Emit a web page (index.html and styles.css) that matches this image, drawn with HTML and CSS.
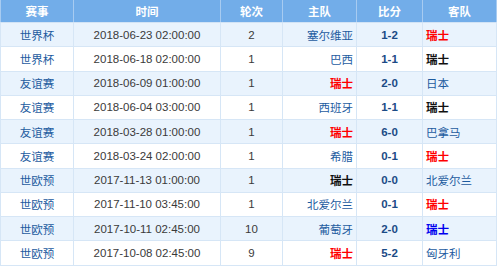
FILE: index.html
```html
<!DOCTYPE html>
<html>
<head>
<meta charset="utf-8">
<link rel="stylesheet" href="styles.css">
</head>
<body>
<table class="matches">
  <colgroup>
    <col class="c-league"><col class="c-time"><col class="c-round"><col class="c-home"><col class="c-score"><col class="c-away">
  </colgroup>
  <thead>
    <tr><th>赛事</th><th>时间</th><th>轮次</th><th>主队</th><th>比分</th><th>客队</th></tr>
  </thead>
  <tbody>
    <tr><td class="league">世界杯</td><td class="time">2018-06-23 02:00:00</td><td class="round">2</td><td class="home">塞尔维亚</td><td class="score">1-2</td><td class="away win">瑞士</td></tr>
    <tr><td class="league">世界杯</td><td class="time">2018-06-18 02:00:00</td><td class="round">1</td><td class="home">巴西</td><td class="score">1-1</td><td class="away draw">瑞士</td></tr>
    <tr><td class="league">友谊赛</td><td class="time">2018-06-09 01:00:00</td><td class="round">1</td><td class="home win">瑞士</td><td class="score">2-0</td><td class="away">日本</td></tr>
    <tr><td class="league">友谊赛</td><td class="time">2018-06-04 03:00:00</td><td class="round">1</td><td class="home">西班牙</td><td class="score">1-1</td><td class="away draw">瑞士</td></tr>
    <tr><td class="league">友谊赛</td><td class="time">2018-03-28 01:00:00</td><td class="round">1</td><td class="home win">瑞士</td><td class="score">6-0</td><td class="away">巴拿马</td></tr>
    <tr><td class="league">友谊赛</td><td class="time">2018-03-24 02:00:00</td><td class="round">1</td><td class="home">希腊</td><td class="score">0-1</td><td class="away win">瑞士</td></tr>
    <tr><td class="league">世欧预</td><td class="time">2017-11-13 01:00:00</td><td class="round">1</td><td class="home draw">瑞士</td><td class="score">0-0</td><td class="away">北爱尔兰</td></tr>
    <tr><td class="league">世欧预</td><td class="time">2017-11-10 03:45:00</td><td class="round">1</td><td class="home">北爱尔兰</td><td class="score">0-1</td><td class="away win">瑞士</td></tr>
    <tr><td class="league">世欧预</td><td class="time">2017-10-11 02:45:00</td><td class="round">10</td><td class="home">葡萄牙</td><td class="score">2-0</td><td class="away lose">瑞士</td></tr>
    <tr><td class="league">世欧预</td><td class="time">2017-10-08 02:45:00</td><td class="round">9</td><td class="home win">瑞士</td><td class="score">5-2</td><td class="away">匈牙利</td></tr>
  </tbody>
</table>
</body>
</html>
```
FILE: styles.css
```css
html, body {
  margin: 0;
  padding: 0;
  background: #ffffff;
}
.matches {
  width: 496px;
  border-collapse: collapse;
  table-layout: fixed;
  font-family: "Liberation Sans", "Noto Sans CJK SC", sans-serif;
  font-size: 11.5px;
  color: #333333;
}
.c-league { width: 73px; }
.c-time { width: 147px; }
.c-round { width: 62px; }
.c-home { width: 74px; }
.c-score { width: 66px; }
.c-away { width: 74px; }
.matches th {
  height: 22px;
  padding: 0;
  background: #72ade9;
  color: #ffffff;
  font-weight: bold;
  text-align: center;
  border-left: 1px solid #a7cbf1;
  border-right: 1px solid #a7cbf1;
  border-bottom: 1px solid #d2e3f5;
}
.matches td {
  height: 23.25px;
  padding: 0;
  text-align: center;
  border: 1px solid #d6e6f6;
  white-space: nowrap;
}
.matches tbody tr:nth-child(odd) td {
  background: #e9f3fd;
}
.league { color: #1d5b9f; }
.time { color: #3a3a3a; }
.round { color: #3a3a3a; }
.matches td.home {
  text-align: right;
  padding-right: 3px;
  color: #1d5b9f;
}
.matches td.away {
  text-align: left;
  padding-left: 3px;
  color: #1d5b9f;
}
.score {
  font-weight: bold;
  color: #1b4b86;
}
.matches td.win { color: #ff0000; font-weight: bold; }
.matches td.draw { color: #111111; font-weight: bold; }
.matches td.lose { color: #0000ee; font-weight: bold; }
```
